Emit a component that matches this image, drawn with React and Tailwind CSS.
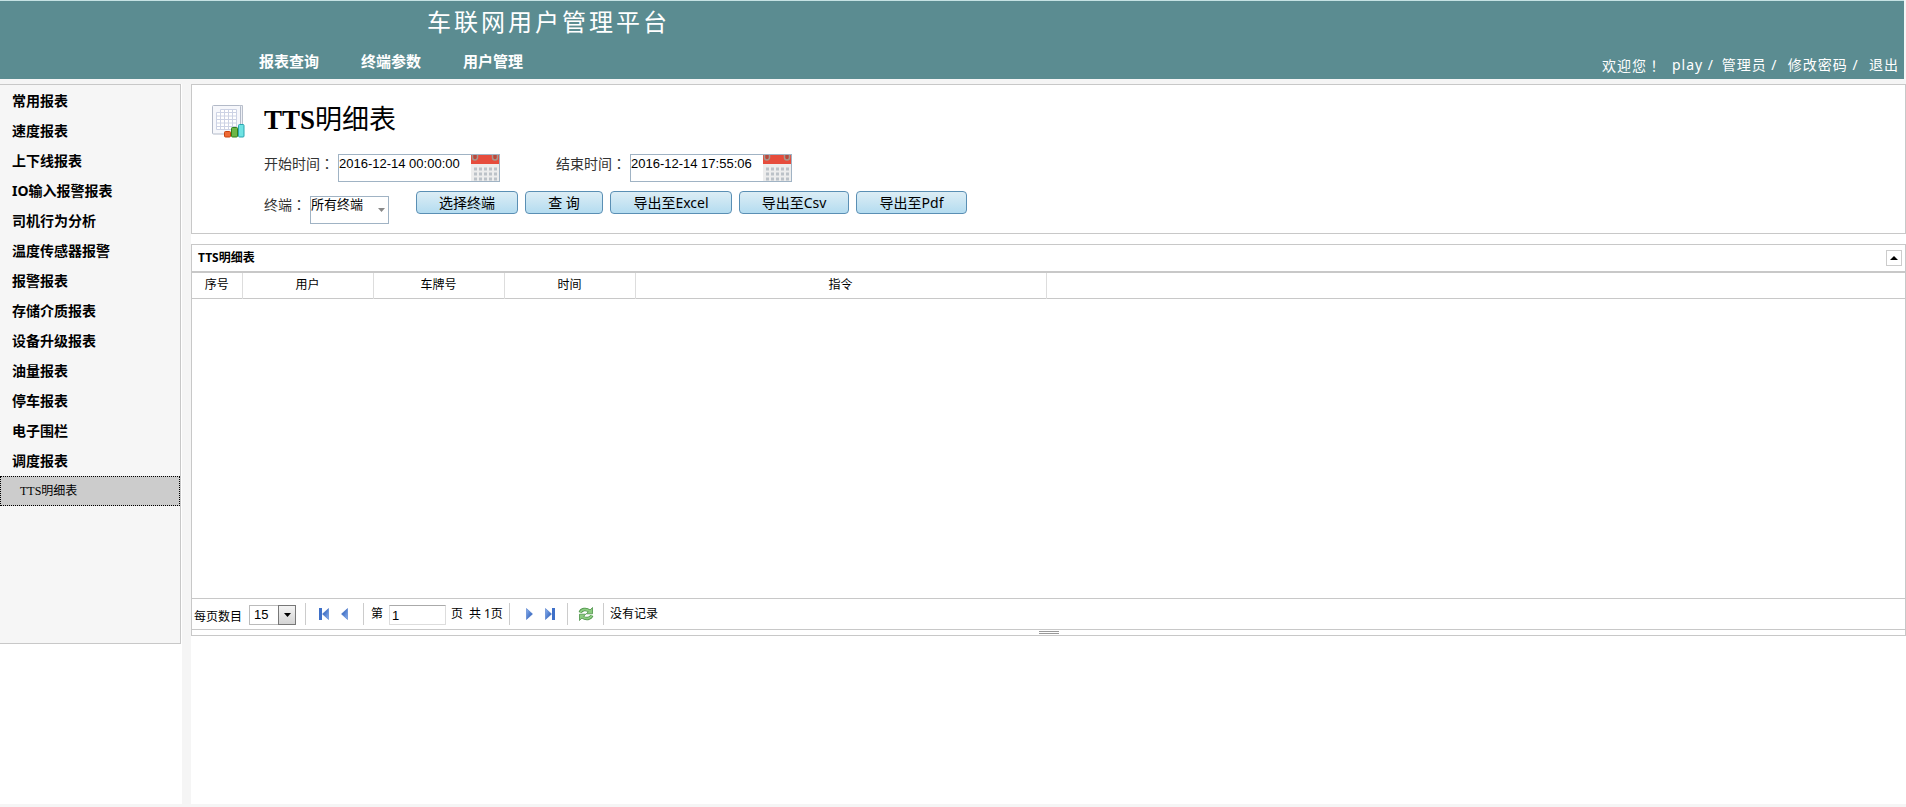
import { useState } from 'react';

const navItems = ['报表查询', '终端参数', '用户管理'];

const menuItems = [
  '常用报表',
  '速度报表',
  '上下线报表',
  'IO输入报警报表',
  '司机行为分析',
  '温度传感器报警',
  '报警报表',
  '存储介质报表',
  '设备升级报表',
  '油量报表',
  '停车报表',
  '电子围栏',
  '调度报表',
];

const columns = [
  { label: '序号', width: 'w-[50px]' },
  { label: '用户', width: 'w-[131px]' },
  { label: '车牌号', width: 'w-[131px]' },
  { label: '时间', width: 'w-[131px]' },
  { label: '指令', width: 'w-[411px]' },
];

const ReportIcon = () => (
  <svg className="w-[33px] h-[33px] mt-1 shrink-0" viewBox="0 0 33 33" fill="none">
    <path d="M3 .5h27.5v25h-3" fill="#eef0f6" stroke="#b9bfcb" />
    <rect x=".5" y=".5" width="28" height="28.5" rx="1" fill="#f6f7fb" stroke="#b3bac8" />
    <path d="M4.5 7.5h4v-3h16v20h-20z" fill="#fff" stroke="#ccd2e4" />
    <path d="M8.500 7.500h16M4.500 11h20M4.500 14.500h20M4.500 18h20M4.500 21.500h20M8.500 7v18M12.500 4v21M16.500 4v21M20.500 4v21" stroke="#ccd2e4" />
    <rect x="12.500" y="26.500" width="6" height="5.500" rx="1" fill="#ee6a35" stroke="#c8430f" />
    <rect x="19.500" y="22.500" width="6" height="9.500" rx="1" fill="#6db647" stroke="#33801c" />
    <rect x="26.500" y="19.500" width="5.500" height="12.500" rx="1" fill="#6fe3e3" stroke="#2aa5b0" />
  </svg>
);

const CalendarIcon = () => (
  <svg className="w-7 h-[26px]" viewBox="0 0 28 26">
    <rect y="1" width="28" height="25" fill="#ededed" />
    <rect width="28" height="9" fill="#e64c3c" />
    <path d="M1.500 0v2.500a2.500 2.500 0 0 0 5 0V0M21.500 0v2.500a2.500 2.500 0 0 0 5 0V0" fill="#b9483c" stroke="#a8968c" strokeWidth="1.500" />
    {[14, 19, 24].map((y) => (
      <path key={y} d={`M3 ${y}h23`} stroke="#bcc2c8" strokeWidth="3" strokeDasharray="3 2" />
    ))}
  </svg>
);

const Arrow = ({ bar, right }) => (
  <svg className={right ? 'w-[10px] h-3' : 'w-[10px] h-3 rotate-180'} viewBox="0 0 10 12">
    <defs>
      <linearGradient id="blue" x1="0" y1="0" x2="1" y2="1">
        <stop offset="0" stopColor="#8db4f2" />
        <stop offset="1" stopColor="#1d4fae" />
      </linearGradient>
    </defs>
    <path d="M.5.5 6.500 6 .5 11.500z" fill="url(#blue)" stroke="#3566c0" strokeWidth=".5" />
    {bar && <rect x="7" y="0" width="3" height="12" fill="#3f70c8" />}
  </svg>
);

const RefreshIcon = () => (
  <svg className="w-4 h-4" viewBox="0 0 16 16" fill="none" strokeLinejoin="round">
    <path d="M2.200 6.500C3.500 3.200 8 2.400 11.500 5" stroke="#4b9247" strokeWidth="3.400" />
    <path d="M13.800 9.500C12.500 12.800 8 13.600 4.500 11" stroke="#4b9247" strokeWidth="3.400" />
    <path d="M14.500 1.500v6.300H8.300zM1.500 14.500V8.200h6.200z" fill="#8ccb80" stroke="#4b9247" strokeWidth=".8" />
    <path d="M2.200 6.500C3.500 3.200 8 2.400 11.800 5.200" stroke="#8ccb80" strokeWidth="2" />
    <path d="M13.800 9.500C12.500 12.800 8 13.600 4.200 10.800" stroke="#8ccb80" strokeWidth="2" />
  </svg>
);

const Separator = () => <span className="w-px h-[22px] bg-[#ccc]" />;

// the TC face centres the full-width colon in its box
const Colon = () => <span className="font-['Noto_Sans_CJK_TC',sans-serif]" lang="zh-Hant">：</span>;

const DateField = ({ id, label, defaultValue }) => (
  <div className="flex items-start">
    <label htmlFor={id} className="w-[74px] leading-[18px]">{label}<Colon /></label>
    <div className="flex w-[162px] h-7 border border-[#a0b3c4]">
      <input
        id={id}
        type="text"
        defaultValue={defaultValue}
        className="flex-1 min-w-0 h-[18px] text-[13px] text-black font-['Liberation_Sans','Noto_Sans_CJK_SC',sans-serif] outline-none"
      />
      <button type="button" aria-label="选择日期" className="shrink-0">
        <CalendarIcon />
      </button>
    </div>
  </div>
);

const ActionButton = ({ width, children }) => (
  <button
    type="button"
    className={`${width} h-[23px] rounded-[4px] border border-[#5a8fb4] bg-linear-to-b from-[#dcedf5] to-[#b4dcf0] text-black leading-5`}
  >
    {children}
  </button>
);

const Header = () => (
  <header className="mr-[2px] h-[79px] border-t border-[#c5e2e3] bg-[#5b8c91] text-white">
    <h1 className="pl-[427px] pt-[3px] text-2xl leading-9 tracking-[3px]">车联网用户管理平台</h1>
    <div className="flex items-start justify-between pl-[259px] pr-[5px] pt-[11px]">
      <nav className="flex gap-[42px] text-[15px] leading-5 font-bold">
        {navItems.map((item) => (
          <a key={item} href="#">{item}</a>
        ))}
      </nav>
      <div className="flex pt-1 text-sm leading-5 tracking-[1px] whitespace-pre">
        <span className="w-[70px]">欢迎您<span className="font-['Noto_Sans_CJK_TC',sans-serif]" lang="zh-Hant">！</span></span>
        <a href="#">play</a>
        <span className="mr-[3px]"> / </span>
        <a href="#">管理员</a>
        <span className="mr-px"> /  </span>
        <a href="#">修改密码</a>
        <span className="mr-px"> /  </span>
        <a href="#">退出</a>
      </div>
    </div>
  </header>
);

const Sidebar = () => (
  <aside className="w-[182px] shrink-0 bg-white">
    <nav className="w-[181px] min-h-[560px] border-t border-r border-b border-[#c8c8c8] bg-[#f6f6f6] pt-px">
      {menuItems.map((item) => (
        <a key={item} href="#" className="block h-[30px] pl-3 text-sm leading-[30px] font-bold text-black">
          {item}
        </a>
      ))}
      <a
        href="#"
        className="block h-[30px] border border-dotted border-black bg-[#ccc] pl-[19px] text-xs leading-7 text-black font-['Liberation_Serif','Noto_Sans_CJK_SC',serif]"
      >
        TTS明细表
      </a>
    </nav>
  </aside>
);

const FilterPanel = () => (
  <section className="flex gap-[19px] border border-[#c8c8c8] bg-white pl-5 pt-4 pb-[9px]">
    <ReportIcon />
    <div className="text-sm text-[#333]">
      <h2 className="pt-px text-[27px] leading-9 text-black font-['Liberation_Serif','Noto_Sans_CJK_SC',serif]">
        <b>TTS</b>明细表
      </h2>
      <div className="mt-4 flex gap-14">
        <DateField id="start" label="开始时间" defaultValue="2016-12-14 00:00:00" />
        <DateField id="end" label="结束时间" defaultValue="2016-12-14 17:55:06" />
      </div>
      <div className="mt-[9px] flex items-start">
        <label htmlFor="terminal" className="w-[46px] pt-1 leading-[18px]">终端<Colon /></label>
        <div className="relative mt-[5px] mr-[27px]">
          <select
            id="terminal"
            className="block w-[79px] h-7 appearance-none border border-[#a0b3c4] bg-white pb-3 text-[13px] leading-[14px] text-black outline-none"
          >
            <option>所有终端</option>
          </select>
          <svg className="absolute right-1 top-3 w-[7px] h-1 pointer-events-none" viewBox="0 0 7 4">
            <path d="M0 0h7L3.500 4z" fill="#888" />
          </svg>
        </div>
        <div className="flex gap-[7px]">
          <ActionButton width="w-[102px]">选择终端</ActionButton>
          <ActionButton width="w-[78px]">查 询</ActionButton>
          <ActionButton width="w-[122px]">导出至Excel</ActionButton>
          <ActionButton width="w-[110px]">导出至Csv</ActionButton>
          <ActionButton width="w-[111px]">导出至Pdf</ActionButton>
        </div>
      </div>
    </div>
  </section>
);

const Pager = () => (
  <div className="flex h-[31px] items-center border-t border-[#c8c8c8] pl-[2px] text-xs text-black">
    <label htmlFor="page-size" className="w-[55px] pt-[5px]">每页数目</label>
    <div className="relative mr-[9px] mt-[2px]">
      <select
        id="page-size"
        className="block w-[47px] h-5 appearance-none border border-[#bbb] bg-white pl-1 text-[13px] leading-[18px] font-['Liberation_Sans',sans-serif] outline-none"
      >
        <option>15</option>
      </select>
      <span className="absolute right-0 top-0 flex w-[18px] h-5 items-center justify-center border border-[#777] bg-linear-to-b from-[#f4f4f4] to-[#d4d4d4] pointer-events-none">
        <svg className="w-[7px] h-1" viewBox="0 0 7 4">
          <path d="M0 0h7L3.500 4z" fill="#000" />
        </svg>
      </span>
    </div>
    <Separator />
    <button type="button" aria-label="首页" className="ml-[13px]"><Arrow bar /></button>
    <button type="button" aria-label="上一页" className="ml-[9px] mr-[15px]"><Arrow /></button>
    <Separator />
    <label htmlFor="page" className="ml-[7px] w-[18px]">第</label>
    <input
      id="page"
      type="text"
      defaultValue="1"
      className="w-[57px] h-5 mt-[2px] border border-[#ddd] border-t-[#aaa] pl-[2px] text-[13px] font-['Liberation_Sans',sans-serif] outline-none"
    />
    <span className="ml-[5px] w-[18px]">页</span>
    <span className="w-[15px]">共</span>
    <span className="mr-[6px] w-[19px]">1页</span>
    <Separator />
    <button type="button" aria-label="下一页" className="ml-4"><Arrow right /></button>
    <button type="button" aria-label="末页" className="ml-[9px] mr-3"><Arrow bar right /></button>
    <Separator />
    <button type="button" aria-label="刷新" className="ml-[10px] mr-[9px]"><RefreshIcon /></button>
    <Separator />
    <span className="ml-[6px]">没有记录</span>
  </div>
);

const ReportTable = () => {
  const [open, setOpen] = useState(true);

  return (
    <section className="mt-[10px] border border-[#c8c8c8] bg-white text-xs text-black">
      <div className="flex h-[26px] items-center justify-between pl-[6px] pr-[3px]">
        <h3 className="font-bold">TTS明细表</h3>
        <button
          type="button"
          aria-label="折叠"
          onClick={() => setOpen(!open)}
          className="flex w-4 h-4 items-center justify-center border border-[#ccc]"
        >
          <svg className="w-2 h-1" viewBox="0 0 8 4">
            <path d="M0 4h8L4 0z" />
          </svg>
        </button>
      </div>
      {open && (
        <>
          <div className="h-[327px] border-t-2 border-[#c8c8c8]">
            <table className="w-full table-fixed border-collapse">
              <thead>
                <tr className="h-[25px] border-b border-[#c8c8c8]">
                  {columns.map((col) => (
                    <th key={col.label} className={`${col.width} border-r border-r-[#ddd] p-0 font-normal`}>
                      {col.label}
                    </th>
                  ))}
                  <td />
                </tr>
              </thead>
            </table>
          </div>
          <Pager />
          {/* resize handle */}
          <div className="flex h-[6px] flex-col items-center gap-px border-t border-[#c8c8c8] pt-px">
            <span className="w-5 h-px bg-[#999]" />
            <span className="w-5 h-px bg-[#999]" />
          </div>
        </>
      )}
    </section>
  );
};

export default function App() {
  return (
    <div className="flex min-h-screen flex-col border-b-[3px] border-[#f5f5f5] bg-[#f5f5f5] font-['Noto_Sans','Noto_Sans_CJK_SC',sans-serif]">
      <Header />
      <div className="mt-[5px] flex flex-1">
        <Sidebar />
        <main className="ml-[9px] flex-1 min-w-0 bg-white">
          <FilterPanel />
          <ReportTable />
        </main>
      </div>
    </div>
  );
}
